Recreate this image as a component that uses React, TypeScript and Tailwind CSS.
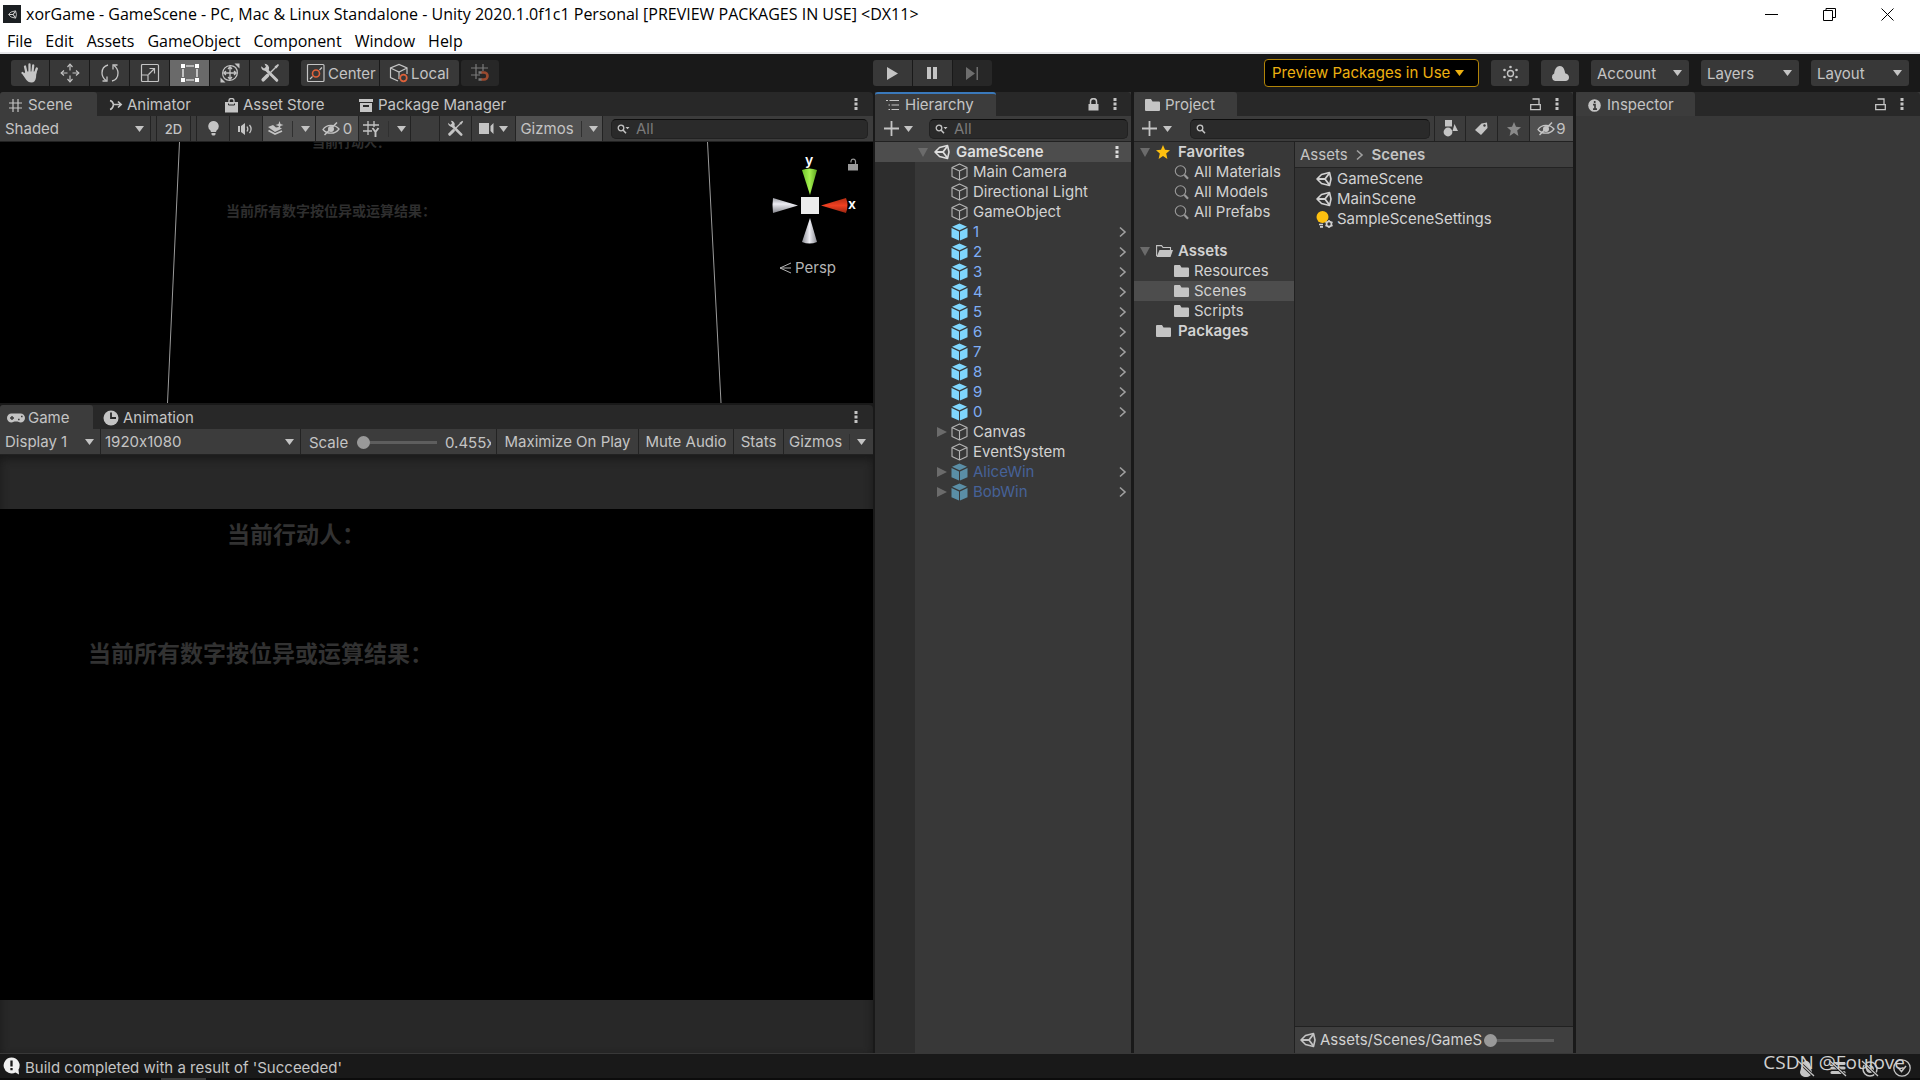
import type { ReactNode } from 'react';
import clsx from 'clsx';

// ---------- icons ----------

interface IconProps {
  w?: number;
  h?: number;
  className?: string;
  children?: ReactNode;
}

const Icon = ({ w = 20, h = 20, className, children }: IconProps) => (
  <svg
    width={w}
    height={h}
    viewBox={`0 0 ${w} ${h}`}
    fill="none"
    stroke="currentColor"
    className={clsx('shrink-0', className)}
    aria-hidden="true"
  >
    {children}
  </svg>
);

const Caret = ({ className }: { className?: string }) => (
  <Icon w={9} h={6} className={className}>
    <path d="M0 0h9L4.5 6z" fill="currentColor" stroke="none" />
  </Icon>
);

const Foldout = ({ open }: { open?: boolean }) => (
  <Icon w={10} h={10} className="text-[#6b6b6b]">
    <path d={open ? 'M0 1h10L5 10z' : 'M0 0v10l10-5z'} fill="currentColor" stroke="none" />
  </Icon>
);

const Dots = () => (
  <Icon w={4} h={14}>
    <path d="M.5 1h3v3h-3zM.5 5.500h3v3h-3zM.5 10h3v3h-3z" fill="currentColor" stroke="none" />
  </Icon>
);

const HandIcon = () => (
  <Icon w={20} h={22}>
    <path d="M6.500 11 5 4.500M9.500 10V2.500M12.500 10l.7-6.500M15 11.500l1.800-5M7 15l-4.500-4" strokeWidth="2.300" strokeLinecap="round" />
    <path d="M5.500 9.500h11l-.5 6c-.3 3-2 5-4.500 5-2.600 0-4-1-5.500-3l-3-4.500z" fill="currentColor" stroke="none" />
  </Icon>
);

const MoveIcon = () => (
  <Icon>
    <path d="M10 7.500V1.500M10 12.500v6M7.500 10h-6M12.500 10h6" strokeWidth="1.200" />
    <path d="M7.500 4 10 1.200 12.500 4M7.500 16l2.500 2.800 2.500-2.800M4 7.500 1.200 10 4 12.500M16 7.500l2.800 2.500-2.800 2.500" strokeWidth="1.200" />
  </Icon>
);

const RotateIcon = () => (
  <Icon>
    <path d="M8 2C4 3 2 6.500 2 10c0 3 1.500 5.500 4 7.500M12 18c4-1 6-4.500 6-8 0-3-1.500-5.500-4-7.500" strokeWidth="1.300" />
    <path d="M2.500 18H7v-4.500M17.500 2H13v4.500" strokeWidth="1.300" />
  </Icon>
);

const ScaleIcon = () => (
  <Icon>
    <rect x="1.500" y="1.500" width="17" height="17" rx="1" strokeWidth="1.200" />
    <path d="M1.500 12h6.500v6.500M8.500 11.500 14.500 5.500M9.500 5.500h5v5" strokeWidth="1.200" />
  </Icon>
);

const RectIcon = () => (
  <Icon>
    <path d="M6 3h8M6 17h8M3 6v8M17 6v8" strokeWidth="1.200" />
    <path d="M1 1h4v4H1zM15 1h4v4h-4zM1 15h4v4H1zM15 15h4v4h-4z" fill="currentColor" stroke="none" />
  </Icon>
);

const TransformIcon = () => (
  <Icon>
    <path d="M4.500 15.500a7.800 7.800 0 0 1 11-11M15.500 4.500a7.800 7.800 0 0 1-11 11" strokeWidth="1.200" />
    <path d="M10 4v12M4 10h12M8 6l2-2.200L12 6M8 14l2 2.200 2-2.200M6 8l-2.200 2L6 12M14 8l2.200 2-2.200 2" strokeWidth="1.300" />
    <path d="M14.500.500h5v5zM.5 14.500v5h5z" fill="currentColor" stroke="none" />
  </Icon>
);

const ToolsIcon = ({ size = 20 }: { size?: number }) => (
  <svg width={size} height={size} viewBox="0 0 20 20" fill="none" stroke="currentColor" className="shrink-0" aria-hidden="true">
    <path d="M6 6.500 16.800 17.300" strokeWidth="3" strokeLinecap="round" />
    <path d="M1.200 3.200 4 5.500 6 3.800 4.500.800A4.500 4.500 0 0 1 9 6.500 4.500 4.500 0 0 1 1.200 3.200z" fill="currentColor" stroke="none" />
    <path d="M10.500 9.500 16 4" strokeWidth="1.500" />
    <path d="m14.500 3.500 3.500-2.500 1 1-2.500 3.500z" fill="currentColor" stroke="none" />
    <path d="m3.200 16.800 4.300-4.300" strokeWidth="3.600" strokeLinecap="round" />
  </svg>
);

const PivotIcon = () => (
  <Icon>
    <rect x="1.500" y="1.500" width="16.500" height="17" rx="1" strokeWidth="1.200" />
    <circle cx="10" cy="10.500" r="3.500" stroke="#e0623a" strokeWidth="1.600" />
    <path d="m4 16 2.500-2.500M13.500 7 16 4.500" strokeWidth="1.200" />
  </Icon>
);

const LocalIcon = () => (
  <Icon>
    <path d="M9 18 1.500 14.500V5L10 1.500 18 5v6M1.500 5 10 9l8-4M10 9v7" strokeWidth="1.200" />
    <circle cx="14.500" cy="15" r="3.300" stroke="#e0623a" strokeWidth="1.700" />
  </Icon>
);

const SnapIcon = () => (
  <Icon>
    <path d="M6 1v15M13 1v7M1 5h17M1 12h9" strokeWidth="1.200" />
    <path d="M11 9.500h3a3.500 3.500 0 0 1 0 7h-3" stroke="#9a4a2f" strokeWidth="2.600" />
    <path d="M8.500 8.200h3v2.600h-3zM8.500 15.200h3v2.600h-3z" fill="currentColor" stroke="none" />
  </Icon>
);

const HashIcon = () => (
  <Icon w={13} h={13}>
    <path d="M4 0v13M9 0v13M0 4h13M0 9h13" strokeWidth="1.200" />
  </Icon>
);

const AnimatorIcon = () => (
  <Icon w={14} h={12}>
    <path d="M1 1.500C3 2 4 3 4.500 5.500 4 8.500 3 10 1 10.500M4.500 5.500H12M9 2.500l3.200 3L9 8.500" strokeWidth="1.600" />
  </Icon>
);

const BagIcon = () => (
  <Icon w={13} h={15}>
    <path d="M4 5V2.500a2.500 2 0 0 1 5 0V5" strokeWidth="1.300" />
    <path d="M0 4h13v10.500H0z" fill="currentColor" stroke="none" />
    <path d="M3.500 5.500v1.500h6V5.500" stroke="#282828" strokeWidth="1" />
  </Icon>
);

const PackageIcon = () => (
  <Icon w={14} h={13}>
    <path d="M0 0h14v3H0zM1 4h12v9H1z" fill="currentColor" stroke="none" />
    <path d="M4 7h6" stroke="#282828" strokeWidth="2" />
  </Icon>
);

const GamepadIcon = () => (
  <Icon w={18} h={10}>
    <path d="M4.500.500h9a4.500 4.500 0 0 1 0 9c-1.500 0-2-1-3-1h-3c-1 0-1.500 1-3 1a4.500 4.500 0 0 1 0-9z" fill="currentColor" stroke="none" />
    <path d="M3 5h4M5 3v4M11 6.500h1.600M14 3.500h1.600" stroke="#3c3c3c" strokeWidth="1.400" />
  </Icon>
);

const ClockIcon = () => (
  <Icon w={16} h={16}>
    <circle cx="8" cy="8" r="7.500" fill="currentColor" stroke="none" />
    <path d="M8 2.500V8h5" stroke="#282828" strokeWidth="1.800" />
  </Icon>
);

const TreeIcon = () => (
  <Icon w={14} h={12}>
    <path d="M0 1.500h2M3.500 1.500H13M2.500 6h1.500M5.500 6H13M2.500 10.500h1.500M5.500 10.500H13" strokeWidth="1.200" />
  </Icon>
);

const FolderIcon = () => (
  <Icon w={15} h={12}>
    <path d="M0 1a1 1 0 0 1 1-1h5l1.500 2.500H14a1 1 0 0 1 1 1V11a1 1 0 0 1-1 1H1a1 1 0 0 1-1-1z" fill="currentColor" stroke="none" />
  </Icon>
);

const OpenFolderIcon = () => (
  <Icon w={17} h={12}>
    <path d="M.6 11V.600h5L7 2.500h7.500V5" strokeWidth="1.100" />
    <path d="M3.500 5H17l-2.500 7H.5z" fill="currentColor" stroke="none" />
  </Icon>
);

const StarIcon = ({ className }: { className?: string }) => (
  <Icon w={14} h={14} className={className}>
    <path d="m7 0 2 4.800 5 .4-3.800 3.300L11.400 14 7 11l-4.400 3 1.200-5.500L0 5.200l5-.4z" fill="currentColor" stroke="none" />
  </Icon>
);

const LensIcon = ({ menu }: { menu?: boolean }) => (
  <Icon w={13} h={10}>
    <circle cx="4" cy="4" r="2.800" strokeWidth="1.300" />
    <path d="m6 6 3 3.200" strokeWidth="1.500" />
    {menu && <path d="M8.500 3h4l-2 2.200z" fill="currentColor" stroke="none" />}
  </Icon>
);

const SavedSearchIcon = () => (
  <Icon w={15} h={15} className="text-[#9a9a9a]">
    <circle cx="6.500" cy="6" r="5.200" strokeWidth="1.100" />
    <path d="m10.500 10 3.500 3.800" strokeWidth="2.200" />
  </Icon>
);

const LockIcon = ({ open }: { open?: boolean }) =>
  open ? (
    <Icon w={11} h={13}>
      <path d="M2.500 1h6.500v5.500M.700 6.700h9.600v5H.700z" strokeWidth="1.300" />
    </Icon>
  ) : (
    <Icon w={11} h={13}>
      <path d="M2.500 6V3.500a3 2.800 0 0 1 6 0V6" strokeWidth="1.500" />
      <path d="M.5 6h10v6.500H.5z" fill="currentColor" stroke="none" />
    </Icon>
  );

const InfoIcon = () => (
  <Icon w={13} h={13}>
    <circle cx="6.500" cy="6.500" r="6.300" fill="currentColor" stroke="none" />
    <path d="M6.700 2v2M5 5.700h2V10M5 10.200h4" stroke="#3c3c3c" strokeWidth="1.700" />
  </Icon>
);

const BulbIcon = () => (
  <Icon w={11} h={15}>
    <path d="M5.500 0a5.200 5.200 0 0 1 3.200 9.300L8 11H3l-.7-1.700A5.200 5.200 0 0 1 5.500 0zM3.500 12h4v1.500l-1 1h-2l-1-1z" fill="currentColor" stroke="none" />
  </Icon>
);

const SpeakerIcon = () => (
  <Icon w={16} h={12}>
    <path d="M0 3h2v6H0zM3 3l4-3v12L3 9z" fill="currentColor" stroke="none" />
    <path d="M9 3.500c1 1.500 1 3.500 0 5M11.500 2c2 2.500 2 5.500 0 8" strokeWidth="1.300" />
  </Icon>
);

const EffectsIcon = () => (
  <Icon w={16} h={15}>
    <path d="m0 6 5-2 3 2.500L11 6l3 1.500L7 11z" fill="currentColor" stroke="none" />
    <path d="m.5 9.500 6.500 3.500 7-3" strokeWidth="1.800" />
    <path d="M11.500 0 12.500 3l3 1-3 1-1 3-1-3-3-1 3-1z" fill="currentColor" stroke="none" />
  </Icon>
);

const HiddenIcon = () => (
  <Icon w={18} h={14}>
    <path d="M1 7.500C4.500 2 13 2 17 7c-4 5.500-12 5.500-16 .5z" strokeWidth="1.300" />
    <circle cx="9" cy="7" r="3" fill="currentColor" stroke="none" />
    <path d="M2.500 13 15 .500" strokeWidth="1.500" />
  </Icon>
);

const GridAxisIcon = () => (
  <Icon w={17} h={16}>
    <path d="M5 0v14M11 0v6M0 4h16M0 10h9" strokeWidth="1.300" />
    <path d="m9.500 7 3 4 3-4M12.500 11v5" strokeWidth="1.900" />
  </Icon>
);

const CameraIcon = () => (
  <Icon w={16} h={11}>
    <path d="M0 0h10v11H0zM11.500 3 14.500 0v11l-3-3z" fill="currentColor" stroke="none" />
  </Icon>
);

const PlusIcon = () => (
  <Icon w={15} h={15}>
    <path d="M7.500 0v15M0 7.500h15" strokeWidth="1.800" />
  </Icon>
);

const UnityIcon = ({ size = 16 }: { size?: number }) => (
  <svg width={size} height={size} viewBox="0 0 16 16" fill="none" stroke="currentColor" className="shrink-0" aria-hidden="true">
    <path d="M1 8 5.500 3.500 13.500 1.500 15 8l-1.500 6.500-8-2z" strokeWidth="1.600" strokeLinejoin="round" />
    <path d="M1.500 8H9M9 8l4.500-6M9 8l4.500 6" strokeWidth="1.800" />
  </svg>
);

const CubeIcon = () => (
  <Icon w={17} h={18} className="text-[#b4b4b4]">
    <path d="M8.500 1 16 4.500v9L8.500 17 1 13.500v-9zM1 4.500 8.500 8 16 4.500M8.500 8v9" strokeWidth="1.100" strokeLinejoin="round" />
  </Icon>
);

const PrefabIcon = ({ dim }: { dim?: boolean }) => (
  <Icon w={17} h={18} className={dim ? 'text-[#5a8ea6]' : 'text-[#7fd6fd]'}>
    <path d="m8.500.500 7.500 3.300-7.500 3.500L1 3.800zM.500 5 8 8.500v9L.500 14.200zM16.500 5 9 8.500v9l7.500-3.300z" fill="currentColor" stroke="none" />
  </Icon>
);

const LightingIcon = () => (
  <Icon w={17} h={17}>
    <circle cx="6.500" cy="6" r="6" fill="#fdc010" stroke="none" />
    <path d="M3 13.500h4M4 15.800h3" strokeWidth="1.700" />
    <circle cx="13" cy="13" r="2.500" strokeWidth="1.700" />
    <path d="M13 9v1M13 16v1M9.500 11l1 .5M15.500 14.500l1 .5M9.500 15l1-.5M15.500 11.500l1-.5" strokeWidth="1.500" />
  </Icon>
);

const ChevronIcon = ({ className }: { className?: string }) => (
  <Icon w={8} h={12} className={className}>
    <path d="m1 1.500 5 4.500-5 4.500" strokeWidth="1.600" />
  </Icon>
);

const ShapesIcon = () => (
  <Icon w={15} h={17}>
    <path d="M2 0h7v6.500H2zM11.500 4 15 11H9.500z" fill="currentColor" stroke="none" />
    <circle cx="5" cy="12" r="4.400" fill="currentColor" stroke="none" />
  </Icon>
);

const TagIcon = () => (
  <Icon w={13} h={13}>
    <path d="M6.500 1.500 12 .500l.5 5.500-6.500 7L0 8z" fill="currentColor" stroke="none" />
    <circle cx="9.500" cy="3.500" r="1.200" fill="#3c3c3c" stroke="none" />
  </Icon>
);

const PulseIcon = () => (
  <Icon w={17} h={17}>
    <circle cx="8.500" cy="8.500" r="3" strokeWidth="1.400" />
    <g fill="currentColor" stroke="none">
      <circle cx="8.500" cy="2" r="1.300" />
      <circle cx="8.500" cy="15" r="1.300" />
      <circle cx="2.500" cy="5" r="1.300" />
      <circle cx="14.500" cy="5" r="1.300" />
      <circle cx="2.500" cy="12" r="1.300" />
      <circle cx="14.500" cy="12" r="1.300" />
    </g>
  </Icon>
);

const CloudIcon = () => (
  <Icon w={18} h={15}>
    <path d="M4 15a4 4 0 0 1-.8-7.500C3.500 3 6 0 8.500 0c2.800 0 4.500 2 5 4.500C14 6 14 7 14.500 7.500 17 8 18 9.500 18 11.500S16.500 15 14.500 15z" fill="currentColor" stroke="none" />
  </Icon>
);

// ---------- shared controls ----------

const Tab = ({ active, focused, icon, children, className }: {
  active?: boolean;
  focused?: boolean;
  icon: ReactNode;
  children: ReactNode;
  className?: string;
}) => (
  <button
    type="button"
    className={clsx(
      'flex h-6 items-center gap-1 rounded-t-[3px] border-t-2',
      active && 'bg-[#3c3c3c]',
      focused ? 'border-[#3a79bb]' : 'border-transparent',
      className
    )}
  >
    {icon}
    <span>{children}</span>
  </button>
);

const TabBar = ({ children, lock, end = 'pr-[14px]' }: {
  children: ReactNode;
  lock?: 'open' | 'closed';
  end?: string;
}) => (
  <div className="flex h-6 shrink-0 items-center rounded-t-[4px] bg-[#282828]">
    {children}
    <div className={clsx('ml-auto flex items-center gap-[14px]', end)}>
      {lock && (
        <button type="button" aria-label="Lock">
          <LockIcon open={lock === 'open'} />
        </button>
      )}
      <button type="button" aria-label="Panel menu">
        <Dots />
      </button>
    </div>
  </div>
);

const Bar = ({ children }: { children: ReactNode }) => (
  <div className="flex h-[26px] shrink-0 items-stretch overflow-hidden border-b border-[#212121] bg-[#3c3c3c]">
    {children}
  </div>
);

const BarButton = ({ label, on, className, children }: {
  label?: string;
  on?: boolean;
  className?: string;
  children?: ReactNode;
}) => (
  <button
    type="button"
    aria-label={label}
    className={clsx(
      'flex shrink-0 items-center justify-center whitespace-nowrap border-r border-[#232323]',
      on && 'bg-[#505050]',
      className
    )}
  >
    {children}
  </button>
);

const Divider = () => <span className="h-4 w-px bg-[#303030]" />;

const Dropdown = ({ label, value, className, caretClass }: {
  label: string;
  value: string;
  className: string;
  caretClass: string;
}) => (
  <div className={clsx('relative flex shrink-0 items-center', className)}>
    <select aria-label={label} className="h-full w-full appearance-none bg-transparent outline-none">
      <option>{value}</option>
    </select>
    <Caret className={clsx('pointer-events-none absolute top-1/2 -translate-y-1/2', caretClass)} />
  </div>
);

const Search = ({ label, placeholder, menu, className }: {
  label: string;
  placeholder?: string;
  menu?: boolean;
  className?: string;
}) => (
  <label
    className={clsx(
      'flex h-5 min-w-0 flex-1 items-center gap-[3px] self-center rounded-[5px] border border-[#212121] border-t-[#0d0d0d] bg-[#2a2a2a] pl-[5px]',
      className
    )}
  >
    <LensIcon menu={menu} />
    <input
      type="text"
      aria-label={label}
      placeholder={placeholder}
      className="w-full min-w-0 bg-transparent pl-[3px] outline-none placeholder:text-[#7a7a7a]"
    />
  </label>
);

const Slider = ({ label, className }: { label: string; className: string }) => (
  <input
    type="range"
    aria-label={label}
    defaultValue={0}
    className={clsx(
      'h-3 appearance-none bg-transparent',
      '[&::-webkit-slider-runnable-track]:h-[3px] [&::-webkit-slider-runnable-track]:bg-[#5e5e5e]',
      '[&::-webkit-slider-thumb]:-mt-[5px] [&::-webkit-slider-thumb]:size-[13px] [&::-webkit-slider-thumb]:appearance-none [&::-webkit-slider-thumb]:rounded-full [&::-webkit-slider-thumb]:bg-[#999999]',
      className
    )}
  />
);

// ---------- window chrome ----------

const menus = ['File', 'Edit', 'Assets', 'GameObject', 'Component', 'Window', 'Help'];

const TitleBar = () => (
  <header className="shrink-0 border-b-2 border-[#e6e7ea] bg-white font-['Open_Sans',sans-serif] text-base text-black">
    <div className="flex h-7 items-center">
      <span className="ml-[3px] flex size-[18px] items-center justify-center bg-[#1b1f22] text-[#d0d0d0]">
        <UnityIcon size={9} />
      </span>
      <h1 className="ml-[5px] whitespace-nowrap">
        xorGame - GameScene - PC, Mac &amp; Linux Standalone - Unity 2020.1.0f1c1 Personal [PREVIEW PACKAGES IN USE] &lt;DX11&gt;
      </h1>
      <div className="ml-auto flex items-center gap-[45px] pr-[26px]">
        <button type="button" aria-label="Minimize">
          <Icon w={13} h={13}><path d="M0 6.500h13" stroke="#000" /></Icon>
        </button>
        <button type="button" aria-label="Restore">
          <Icon w={13} h={13}><path d="M.5 2.500h9v10h-9zM3 2V.500h9.500v9H10" stroke="#000" /></Icon>
        </button>
        <button type="button" aria-label="Close">
          <Icon w={13} h={13}><path d="m.500.500 12 12m0-12-12 12" stroke="#000" /></Icon>
        </button>
      </div>
    </div>
    <nav className="flex h-6 items-center gap-[13px] pl-[7px] pt-[2px]">
      {menus.map((name) => (
        <button key={name} type="button">{name}</button>
      ))}
    </nav>
  </header>
);

const tools = [
  { name: 'Hand', icon: <HandIcon /> },
  { name: 'Move', icon: <MoveIcon /> },
  { name: 'Rotate', icon: <RotateIcon /> },
  { name: 'Scale', icon: <ScaleIcon /> },
  { name: 'Rect', icon: <RectIcon />, on: true },
  { name: 'Transform', icon: <TransformIcon /> },
  { name: 'Custom tools', icon: <ToolsIcon /> },
];

const Toolbar = () => (
  <div className="flex h-[38px] shrink-0 items-center px-[11px]">
    <div className="flex gap-px overflow-hidden rounded-[3px]">
      {tools.map(({ name, icon, on }) => (
        <button
          key={name}
          type="button"
          aria-label={name}
          className={clsx(
            'flex h-[26px] w-[39px] items-center justify-center first:w-[38px]',
            on ? 'bg-[#6a6a6a] text-white' : 'bg-[#383838]'
          )}
        >
          {icon}
        </button>
      ))}
    </div>
    <div className="ml-3 flex gap-px">
      <button type="button" className="flex h-[26px] w-[78px] items-center gap-[2px] rounded-l-[3px] bg-[#383838] pl-[5px]">
        <PivotIcon /><span className="pt-px">Center</span>
      </button>
      <button type="button" className="flex h-[26px] w-[79px] items-center gap-[2px] rounded-r-[3px] bg-[#383838] pl-[9px]">
        <LocalIcon /><span className="pt-px">Local</span>
      </button>
    </div>
    <button type="button" aria-label="Grid snapping" className="ml-[2px] flex h-[26px] w-[38px] items-center justify-center rounded-[3px] bg-[#272727] text-[#7a7a7a]">
      <SnapIcon />
    </button>
    <div className="grow-[373]" />
    <div className="flex gap-px">
      <button type="button" aria-label="Play" className="flex h-[26px] w-[39px] items-center justify-center rounded-l-[3px] bg-[#383838]">
        <Icon w={11} h={13}><path d="M0 0v13l11-6.500z" fill="currentColor" stroke="none" /></Icon>
      </button>
      <button type="button" aria-label="Pause" className="flex h-[26px] w-[39px] items-center justify-center bg-[#383838]">
        <Icon w={10} h={12}><path d="M0 0h4v12H0zM6 0h4v12H6z" fill="currentColor" stroke="none" /></Icon>
      </button>
      <button type="button" aria-label="Step" disabled className="flex h-[26px] w-[39px] items-center justify-center rounded-r-[3px] bg-[#272727] text-[#6e6e6e]">
        <Icon w={12} h={13}><path d="M0 0v13l9-6.500zM10.500 0H12v13h-1.500z" fill="currentColor" stroke="none" /></Icon>
      </button>
    </div>
    <div className="grow-[272]" />
    <div className="flex items-center gap-3">
      <button type="button" className="flex h-7 w-[215px] items-center gap-[5px] whitespace-nowrap rounded-[4px] border border-[#b18408] bg-black pl-[7px] text-[#edb011]">
        Preview Packages in Use
        <Caret />
      </button>
      <button type="button" aria-label="Collaborate" className="flex h-[26px] w-[38px] items-center justify-center rounded-[3px] bg-[#383838]">
        <PulseIcon />
      </button>
      <button type="button" aria-label="Services" className="flex h-[26px] w-[38px] items-center justify-center rounded-[3px] bg-[#383838]">
        <CloudIcon />
      </button>
      {['Account', 'Layers', 'Layout'].map((name) => (
        <Dropdown key={name} label={name} value={name} className="h-[26px] w-[98px] rounded-[3px] bg-[#383838] pl-[6px] pt-px" caretClass="right-[7px]" />
      ))}
    </div>
  </div>
);

// ---------- scene ----------

const Gizmo = () => (
  <svg width="90" height="100" viewBox="0 -10 90 100" className="absolute right-[12px] top-[2px]" aria-hidden="true">
    <defs>
      <linearGradient id="coneUp"><stop offset="0" stopColor="#6fc52a" /><stop offset=".5" stopColor="#a4f04f" /><stop offset="1" stopColor="#5da61f" /></linearGradient>
      <linearGradient id="coneDown"><stop offset="0" stopColor="#8a8b92" /><stop offset=".5" stopColor="#ececf2" /><stop offset="1" stopColor="#8a8b92" /></linearGradient>
      <linearGradient id="coneLeft" x2="0" y2="1"><stop offset="0" stopColor="#9b9ca3" /><stop offset=".4" stopColor="#ececf2" /><stop offset="1" stopColor="#85868c" /></linearGradient>
      <linearGradient id="coneRight" x2="0" y2="1"><stop offset="0" stopColor="#b12c12" /><stop offset=".5" stopColor="#f04022" /><stop offset="1" stopColor="#992510" /></linearGradient>
    </defs>
    <path d="M31 16q7.500-3 15 0L39 41z" fill="url(#coneUp)" />
    <path d="M31 88q7.500 3 15 0L39 64z" fill="url(#coneDown)" />
    <path d="M2 44q-1 7 0 15l25-7.500z" fill="url(#coneLeft)" />
    <path d="M75 44q3 7 0 15l-25-7.500z" fill="url(#coneRight)" />
    <path d="M30 43h18v17H30z" fill="#ececec" />
    <text x="38" y="11" textAnchor="middle" fill="#fff" className="text-[14px] font-semibold">y</text>
    <text x="81" y="55" textAnchor="middle" fill="#fff" className="text-[14px] font-semibold">x</text>
  </svg>
);

const SceneView = () => (
  <section className="flex h-[311px] shrink-0 flex-col">
    <TabBar end="pr-[15px]">
      <Tab active icon={<HashIcon />} className="w-[97px] gap-[6px] pl-[9px]">Scene</Tab>
      <Tab icon={<AnimatorIcon />} className="w-[115px] pl-3">Animator</Tab>
      <Tab icon={<BagIcon />} className="w-[135px] gap-[5px] pl-[13px]">Asset Store</Tab>
      <Tab icon={<PackageIcon />} className="gap-[5px] pl-3">Package Manager</Tab>
    </TabBar>
    <Bar>
      <Dropdown label="Draw mode" value="Shaded" className="w-[151px] border-r border-[#232323] pl-[5px]" caretClass="right-[6px]" />
      <span className="w-[6px] border-r border-[#232323]" />
      <BarButton className="w-[34px] text-[13px] font-medium">2D</BarButton>
      <span className="w-[6px] border-r border-[#232323]" />
      <BarButton label="Scene lighting" className="w-[33px]"><BulbIcon /></BarButton>
      <BarButton label="Scene audio" className="w-[33px]"><SpeakerIcon /></BarButton>
      <BarButton label="Effects" on className="w-[53px] gap-2"><EffectsIcon /><Divider /><Caret /></BarButton>
      <BarButton label="Hidden objects" on className="w-[43px] gap-[3px]"><HiddenIcon />0</BarButton>
      <BarButton label="Grid" className="w-[52px] gap-2"><GridAxisIcon /><Divider /><Caret /></BarButton>
      <span className="w-[29px] border-r border-[#232323]" />
      <BarButton label="Component tools" className="w-[32px]"><ToolsIcon size={17} /></BarButton>
      <BarButton label="Camera" className="w-[44px] gap-1"><CameraIcon /><Caret /></BarButton>
      <BarButton on className="w-[87px] gap-[7px]">Gizmos<Divider /><Caret /></BarButton>
      <Search label="Search scene" placeholder="All" menu className="ml-2 mr-[5px]" />
    </Bar>
    <div className="relative flex-1 overflow-hidden bg-black">
      <svg className="absolute inset-0 h-full w-full" viewBox="0 0 873 261" preserveAspectRatio="none" aria-hidden="true">
        <path d="M179.500 0 167.500 261M707.500 0l13.500 261" stroke="#9a9a9a" strokeWidth="1" fill="none" />
      </svg>
      <p className="absolute -top-2 left-[312px] text-[13px] font-bold leading-4 text-[#2e2e2e]">当前行动人：</p>
      <p className="absolute left-[226px] top-[61px] text-[14px] font-bold leading-4 text-[#2e2e2e]">当前所有数字按位异或运算结果：</p>
      <Gizmo />
      <button type="button" aria-label="Lock view rotation" className="absolute right-[15px] top-4 text-[#9a9a9a]">
        <Icon w={10} h={13}>
          <path d="M3 4.500V3a2.300 2.300 0 0 1 4.500 0v3" strokeWidth="1.200" />
          <path d="M0 6h10v6.500H0z" fill="currentColor" stroke="none" />
        </Icon>
      </button>
      <button type="button" className="absolute right-[37px] top-[116px] flex items-center gap-[3px] text-[#b4b4b4]">
        <Icon w={13} h={12}><path d="M12 1 1 6l11 5M1 6h11" /></Icon>
        Persp
      </button>
    </div>
  </section>
);

// ---------- game ----------

const GameView = () => (
  <section className="mt-[2px] flex min-h-0 flex-1 flex-col">
    <TabBar end="pr-[15px]">
      <Tab active icon={<GamepadIcon />} className="w-[93px] gap-[3px] pl-[7px]">Game</Tab>
      <Tab icon={<ClockIcon />} className="pl-[10px]">Animation</Tab>
    </TabBar>
    <Bar>
      <Dropdown label="Display" value="Display 1" className="w-[101px] border-r border-[#232323] pl-[5px]" caretClass="right-[6px]" />
      <Dropdown label="Resolution" value="1920x1080" className="w-[200px] border-r border-[#232323] pl-1" caretClass="right-[6px]" />
      <div className="flex w-[196px] shrink-0 items-center overflow-hidden border-r border-[#232323] pl-2 pt-[2px]">
        <span className="w-12">Scale</span>
        <Slider label="Scale" className="w-20" />
        <span className="ml-2 w-[46px] overflow-hidden">0.455x</span>
      </div>
      <BarButton className="w-[142px]">Maximize On Play</BarButton>
      <BarButton className="w-[95px]">Mute Audio</BarButton>
      <BarButton className="w-[50px]">Stats</BarButton>
      <button type="button" className="flex flex-1 items-center gap-[7px] pl-[5px]">Gizmos<Divider /><Caret /></button>
    </Bar>
    <div className="flex flex-1 flex-col bg-[#282828] shadow-[inset_0_4px_8px_#191919]">
      <div className="h-[54px] shrink-0" />
      <div className="flex-1 bg-black text-[23px] font-bold leading-8 text-[#323232]">
        <p className="pl-[227px] pt-[10px]">当前行动人：</p>
        <p className="pl-[88px] pt-[87px]">当前所有数字按位异或运算结果：</p>
      </div>
      <div className="h-[53px] shrink-0" />
    </div>
  </section>
);

// ---------- hierarchy ----------

type Kind = 'object' | 'prefab' | 'inactive';

const nodes: { name: string; kind: Kind; fold?: boolean }[] = [
  { name: 'Main Camera', kind: 'object' },
  { name: 'Directional Light', kind: 'object' },
  { name: 'GameObject', kind: 'object' },
  ...['1', '2', '3', '4', '5', '6', '7', '8', '9', '0'].map((name) => ({ name, kind: 'prefab' as const })),
  { name: 'Canvas', kind: 'object', fold: true },
  { name: 'EventSystem', kind: 'object' },
  { name: 'AliceWin', kind: 'inactive', fold: true },
  { name: 'BobWin', kind: 'inactive', fold: true },
];

const nodeColor: Record<Kind, string> = {
  object: 'text-[#d2d2d2]',
  prefab: 'text-[#7faef5]',
  inactive: 'text-[#466299]',
};

const Hierarchy = () => (
  <section className="flex min-w-0 flex-col bg-[#383838]">
    <TabBar lock="closed">
      <Tab active focused icon={<TreeIcon />} className="w-[121px] gap-[5px] pl-[11px]">Hierarchy</Tab>
    </TabBar>
    <Bar>
      <button type="button" aria-label="Create" className="flex items-center gap-[5px] pl-[9px]"><PlusIcon /><Caret /></button>
      <Search label="Search hierarchy" placeholder="All" menu className="ml-4 mr-[3px]" />
    </Bar>
    <div className="flex h-5 shrink-0 items-center bg-[#4d4d4d] pl-[43px] pr-3 font-semibold text-[#dedede]">
      <Foldout open />
      <span className="ml-[6px] mr-[6px]"><UnityIcon /></span>
      GameScene
      <button type="button" aria-label="Scene menu" className="ml-auto"><Dots /></button>
    </div>
    <div className="flex flex-1">
      <div className="w-10 bg-[#2d2d2d]" />
      <ul className="flex-1">
        {nodes.map(({ name, kind, fold }) => (
          <li key={name} className="flex h-5 items-center pr-1">
            <span className="flex w-9 shrink-0 justify-end pr-1">{fold && <Foldout />}</span>
            {kind === 'object' ? <CubeIcon /> : <PrefabIcon dim={kind === 'inactive'} />}
            <span className={clsx('ml-[5px]', nodeColor[kind])}>{name}</span>
            {kind !== 'object' && (
              <button type="button" aria-label={`Open ${name}`} className="ml-auto text-[#a0a0a0]">
                <ChevronIcon />
              </button>
            )}
          </li>
        ))}
      </ul>
    </div>
  </section>
);

// ---------- project ----------

const TreeRow = ({ icon, name, fold, child, selected }: {
  icon: ReactNode;
  name: string;
  fold?: boolean;
  child?: boolean;
  selected?: boolean;
}) => (
  <li
    className={clsx(
      'flex h-5 items-center whitespace-nowrap text-[#d2d2d2]',
      child ? 'gap-[5px] pl-10' : 'gap-[6px] pl-[6px] font-semibold',
      selected && 'bg-[#4d4d4d]'
    )}
  >
    {!child && <span className="w-[10px] shrink-0">{fold && <Foldout open />}</span>}
    <span className={clsx('flex shrink-0 text-[#c4c4c4]', child ? 'w-[15px]' : 'w-[16px]')}>{icon}</span>
    {name}
  </li>
);

const files = [
  { name: 'GameScene', icon: <UnityIcon /> },
  { name: 'MainScene', icon: <UnityIcon /> },
  { name: 'SampleSceneSettings', icon: <LightingIcon /> },
];

const Project = () => (
  <section className="flex min-w-0 flex-col bg-[#383838]">
    <TabBar lock="open">
      <Tab active icon={<FolderIcon />} className="w-[103px] gap-[5px] pl-[11px]">Project</Tab>
    </TabBar>
    <Bar>
      <button type="button" aria-label="Create" className="flex items-center gap-[6px] pl-2"><PlusIcon /><Caret /></button>
      <Search label="Search project" className="ml-[18px] mr-1" />
      <BarButton label="Search by type" className="w-8 border-l"><ShapesIcon /></BarButton>
      <BarButton label="Search by label" className="w-8"><TagIcon /></BarButton>
      <BarButton label="Save search" className="w-8 text-[#8a8a8a]"><StarIcon /></BarButton>
      <BarButton label="Hidden packages" on className="w-[43px] gap-px border-r-0"><HiddenIcon />9</BarButton>
    </Bar>
    <div className="flex min-h-0 flex-1">
      <ul className="w-[161px] shrink-0 border-r border-[#212121]">
        <TreeRow fold icon={<StarIcon className="text-[#fdc010]" />} name="Favorites" />
        <TreeRow child icon={<SavedSearchIcon />} name="All Materials" />
        <TreeRow child icon={<SavedSearchIcon />} name="All Models" />
        <TreeRow child icon={<SavedSearchIcon />} name="All Prefabs" />
        <li className="h-[19px]" />
        <TreeRow fold icon={<OpenFolderIcon />} name="Assets" />
        <TreeRow child icon={<FolderIcon />} name="Resources" />
        <TreeRow child selected icon={<FolderIcon />} name="Scenes" />
        <TreeRow child icon={<FolderIcon />} name="Scripts" />
        <TreeRow icon={<FolderIcon />} name="Packages" />
      </ul>
      <div className="flex min-w-0 flex-1 flex-col bg-[#333333]">
        <nav className="flex h-[26px] shrink-0 items-center gap-2 border-b border-[#232323] bg-[#3f3f3f] pl-[5px]">
          <button type="button">Assets</button>
          <ChevronIcon className="text-[#a0a0a0]" />
          <button type="button" className="font-semibold">Scenes</button>
        </nav>
        <ul className="flex-1 pt-px text-[#d2d2d2]">
          {files.map(({ name, icon }) => (
            <li key={name} className="flex h-5 items-center pl-[21px]">
              <span className="flex w-[21px] shrink-0">{icon}</span>
              {name}
            </li>
          ))}
        </ul>
        <footer className="flex h-[27px] shrink-0 items-center border-t border-[#212121] bg-[#3f3f3f] pl-[5px] pr-[19px]">
          <UnityIcon />
          <span className="ml-1 w-[164px] overflow-hidden whitespace-nowrap text-[#d2d2d2]">Assets/Scenes/GameS</span>
          <Slider label="Icon size" className="min-w-0 flex-1" />
        </footer>
      </div>
    </div>
  </section>
);

const Inspector = () => (
  <section className="min-w-0 bg-[#383838]">
    <TabBar lock="open" end="pr-4">
      <Tab active icon={<InfoIcon />} className="w-[119px] gap-[6px] pl-3">Inspector</Tab>
    </TabBar>
  </section>
);

// ---------- status bar ----------

const StatusBar = () => (
  <footer className="relative flex h-[27px] shrink-0 items-center border-b-2 border-t border-b-[#0c0c0c] border-t-[#383838] bg-[#191919] text-[#c4c4c4]">
    <Icon w={17} h={18} className="ml-[3px] text-[#f0f0f0]">
      <path d="M8.500.500a8 8 0 1 0 4 15l3.500 2-.5-5A8 8 0 0 0 8.500.500z" fill="currentColor" stroke="none" />
      <path d="M8.500 3.500v6M8.500 11v2.200" stroke="#191919" strokeWidth="2.300" />
    </Icon>
    <span className="ml-[5px] pt-[3px]">Build completed with a result of 'Succeeded'</span>
    <div className="ml-auto flex items-center gap-[14px] pr-[9px] pt-[3px]">
      <button type="button" aria-label="Debugger">
        <Icon w={18} h={18}>
          <path d="M9 2c3 0 4.500 2.500 4.500 5.500L15 13c0 3-3 5-6 5s-6-2-6-5l1.500-5.500C4.500 4.500 6 2 9 2z" fill="currentColor" stroke="none" />
          <path d="m1 2 16 15" stroke="#191919" strokeWidth="3" /><path d="m1 2 16 15" strokeWidth="1.300" />
        </Icon>
      </button>
      <button type="button" aria-label="Cache server">
        <Icon w={18} h={18}>
          <path d="M3 4.500h12M3 9h12M3 13.500h12" strokeWidth="3.200" strokeLinecap="round" />
          <path d="m1 2 16 15" stroke="#191919" strokeWidth="3" /><path d="m1 2 16 15" strokeWidth="1.300" />
        </Icon>
      </button>
      <button type="button" aria-label="Auto lighting">
        <Icon w={18} h={18}>
          <circle cx="9" cy="10" r="7" strokeWidth="1.500" /><circle cx="9" cy="10" r="3.500" fill="currentColor" />
          <path d="m1 2 16 15" stroke="#191919" strokeWidth="3" /><path d="m1 2 16 15" strokeWidth="1.300" />
        </Icon>
      </button>
      <button type="button" aria-label="Progress">
        <Icon w={18} h={18}><circle cx="9" cy="9" r="8.200" strokeWidth="1.300" /><path d="m5 8.500 3.500 4L13 7" strokeWidth="1.500" /></Icon>
      </button>
    </div>
    <p className="absolute -top-[6px] right-[15px] font-['Open_Sans',sans-serif] text-[19px] leading-7 text-[#d0d0d0]">CSDN @Foulove</p>
    <span className="absolute -bottom-[2px] left-[161px] h-[2px] w-[45px] bg-[#3c3c3c]" />
  </footer>
);

export default function App() {
  return (
    <div className="flex h-screen flex-col overflow-hidden bg-[#191919] font-['Inter','Noto_Sans_CJK_SC',sans-serif] text-[15px] leading-5 text-[#c4c4c4] [font-feature-settings:'calt'_0]">
      <TitleBar />
      <Toolbar />
      <main className="grid min-h-0 flex-1 grid-cols-[872fr_256fr_439fr_344fr] gap-[3px]">
        <div className="-mr-px flex min-h-0 min-w-0 flex-col">
          <SceneView />
          <GameView />
        </div>
        <Hierarchy />
        <Project />
        <Inspector />
      </main>
      <StatusBar />
    </div>
  );
}
